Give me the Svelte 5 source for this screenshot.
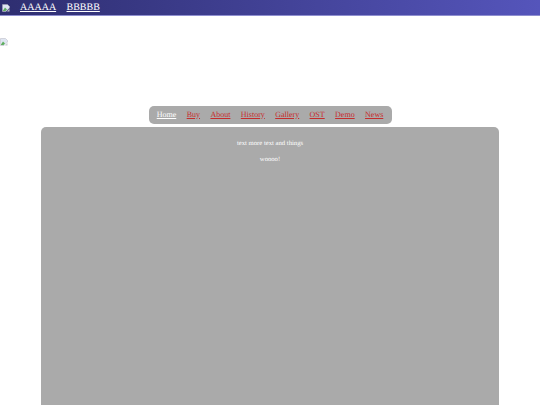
<script>
  const links = ['Buy', 'About', 'History', 'Gallery', 'OST', 'Demo', 'News'];
</script>

<header class="bar">
  <svg class="broken top" viewBox="0 0 16 16" aria-hidden="true">
    <path d="M1 1H11L15 5V8L8 15H1Z" fill="#dfe6f2" stroke="#a8a8b4" />
    <path d="M2 13L6 7L10 11L7 14H2Z" fill="#5fae5f" />
    <path d="M10 15L15 10V15Z" fill="#c8c8d0" />
  </svg>
  <a href="#a">AAAAA</a>
  <a href="#b">BBBBB</a>
</header>

<div class="logo">
  <svg class="broken" viewBox="0 0 16 16" aria-hidden="true">
    <path d="M1 1H11L15 5V8L8 15H1Z" fill="#dfe6f2" stroke="#b4b4c0" />
    <path d="M2 13L6 7L10 11L7 14H2Z" fill="#5fae5f" />
    <path d="M10 15L15 10V15Z" fill="#c8c8d0" />
  </svg>
</div>

<nav class="nav">
  <a class="home" href="#home">Home</a>
  {#each links as link}
    <a href="#{link}">{link}</a>
  {/each}
</nav>

<main class="content">
  <p>text more text and things</p>
  <p>woooo!</p>
</main>

<style>
  :global(body) {
    margin: 0;
    background: #fff;
    height: 405px;
    overflow: hidden;
    font-family: "Liberation Serif", serif;
    text-rendering: geometricPrecision;
  }
  .bar {
    box-sizing: border-box;
    height: 16px;
    display: flex;
    align-items: center;
    gap: 10.4px;
    padding: 0 0 1px 2px;
    background: linear-gradient(90deg, #2e2e70, #5555bb);
    border-bottom: 1px solid #8f8fd0;
  }
  .bar a {
    color: #fff;
    font-size: 10px;
    line-height: 11px;
  }
  .broken {
    display: block;
    width: 8px;
    height: 8px;
  }
  .top {
    margin-top: 1px;
    margin-right: -0.4px;
  }
  .logo {
    height: 89.5px;
    padding-top: 22px;
    box-sizing: border-box;
  }
  .nav {
    box-sizing: border-box;
    width: 243px;
    height: 18px;
    margin: 0 auto 3.5px;
    display: flex;
    align-items: center;
    justify-content: center;
    gap: 10.4px;
    background: #aaa;
    border-radius: 5px;
    font-size: 8px;
  }
  .nav a {
    color: #c62c2c;
    line-height: 9px;
    margin-top: -1px;
  }
  .nav a.home {
    color: #fff;
  }
  .content {
    width: 458px;
    height: 300px;
    margin: 0 auto;
    padding-top: 12px;
    box-sizing: border-box;
    background: #aaa;
    border-radius: 5px 5px 0 0;
    color: #fff;
    font-size: 6.67px;
    text-align: center;
  }
  .content p {
    margin: 0 0 6.5px;
    line-height: 9px;
  }
</style>
